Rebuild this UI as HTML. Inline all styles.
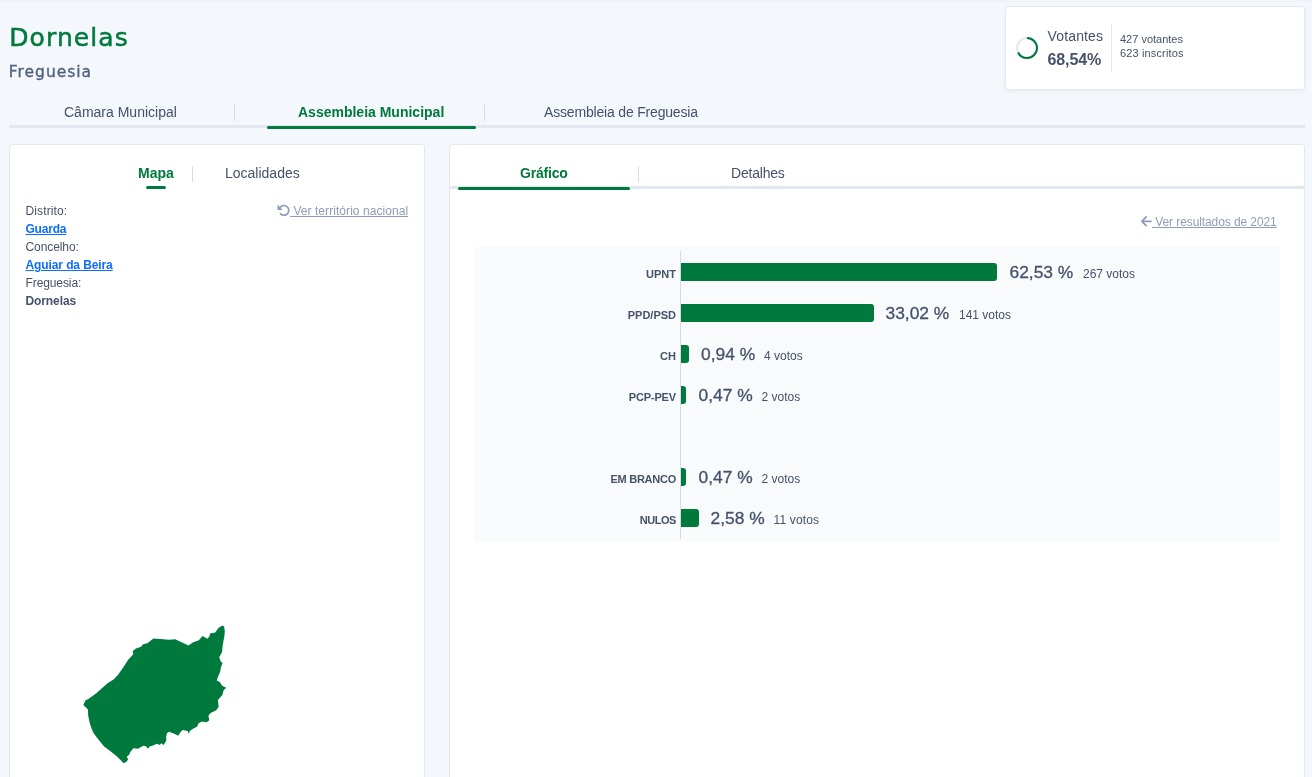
<!DOCTYPE html>
<html lang="pt">
<head>
<meta charset="utf-8">
<title>Dornelas</title>
<style>
*{box-sizing:border-box;margin:0;padding:0}
html,body{width:1312px;height:777px;overflow:hidden}
body{background:#f4f7fb;font-family:"Liberation Sans",sans-serif;color:#465269;position:relative}
.abs{position:absolute;white-space:nowrap;line-height:1}
.card{position:absolute;background:#fff;border:1px solid #e2e8f1;border-radius:3.5px}
.green{color:#00793c}
.b{font-weight:bold}
.t14{font-size:14px}
.bar{position:absolute;background:#00793c;height:18px;left:681px;border-radius:0 3px 3px 0}
.lbl{position:absolute;white-space:nowrap;line-height:1;font-size:11px;font-weight:bold;right:636px;text-align:right}
.pct{position:absolute;white-space:nowrap;line-height:1;font-size:17.4px;-webkit-text-stroke:0.3px #465269}
.vts{position:absolute;white-space:nowrap;line-height:1;font-size:12px}
a{color:inherit}
</style>
</head>
<body><div id="root" style="position:absolute;left:0;top:0;width:1312px;height:777px;will-change:transform">
<div class="abs" style="left:0;top:0;width:1312px;height:3px;background:linear-gradient(#eef2f7,#f4f7fb)"></div>

<!-- header -->
<div id="title" class="abs green" style="left:9.3px;top:24.9px;font-family:'DejaVu Sans',sans-serif;font-size:25px;letter-spacing:1.07px;-webkit-text-stroke:0.5px #00793c">Dornelas</div>
<div id="sub" class="abs" style="left:8.8px;top:64.9px;font-family:'DejaVu Sans',sans-serif;font-size:15.5px;letter-spacing:0.98px;color:#50607f;-webkit-text-stroke:0.35px #50607f">Freguesia</div>

<!-- votantes card -->
<div class="card" style="left:1005px;top:6px;width:300px;height:84px;box-shadow:0 2px 4px rgba(60,80,120,.05)"></div>
<svg class="abs" style="left:1014px;top:35px" width="26" height="26" viewBox="0 0 26 26">
  <circle cx="13" cy="13" r="10" fill="none" stroke="#e3e8f0" stroke-width="2"/>
  <circle cx="13" cy="13" r="10" fill="none" stroke="#00793c" stroke-width="2" stroke-dasharray="42.2 62.83" transform="rotate(-90 13 13)"/>
</svg>
<div id="vot" class="abs" style="left:1047.5px;top:29.3px;font-size:14px;letter-spacing:0.15px">Votantes</div>
<div id="votp" class="abs b" style="left:1047.5px;top:52px;font-size:16px;letter-spacing:-0.12px">68,54%</div>
<div class="abs" style="left:1111px;top:24px;width:1px;height:48px;background:#e3e8f0"></div>
<div id="v1" class="abs" style="left:1120px;top:34px;font-size:11px">427 votantes</div>
<div id="v2" class="abs" style="left:1120px;top:48px;font-size:11px;letter-spacing:0.14px">623 inscritos</div>

<!-- main tabs -->
<div class="abs" style="left:9px;top:125px;width:1296px;height:3px;background:#e3e8f0"></div>
<div class="abs" style="left:267px;top:126px;width:209px;height:3px;background:#00793c;border-radius:2px"></div>
<div class="abs" style="left:234px;top:105px;width:1px;height:16px;background:#d5dbe6"></div>
<div class="abs" style="left:484px;top:105px;width:1px;height:16px;background:#d5dbe6"></div>
<div id="tab1" class="abs t14" style="left:64px;top:105px">Câmara Municipal</div>
<div id="tab2" class="abs t14 b green" style="left:298px;top:105px">Assembleia Municipal</div>
<div id="tab3" class="abs t14" style="left:544px;top:105px;letter-spacing:-0.18px">Assembleia de Freguesia</div>

<!-- left card -->
<div class="card" style="left:9px;top:144px;width:416px;height:700px"></div>
<div id="mapa" class="abs t14 b green" style="left:138px;top:166px">Mapa</div>
<div class="abs" style="left:146px;top:186px;width:20px;height:3px;background:#00793c;border-radius:2px"></div>
<div class="abs" style="left:192px;top:166px;width:1px;height:16px;background:#d5dbe6"></div>
<div id="loc" class="abs t14" style="left:225px;top:166px">Localidades</div>

<div id="l1" class="abs" style="left:25.5px;top:205px;font-size:12px;letter-spacing:0.12px">Distrito:</div>
<div id="l2" class="abs b" style="left:25.5px;top:223px;font-size:12px;color:#0d6efd;letter-spacing:-0.22px"><a href="#" style="text-decoration:underline">Guarda</a></div>
<div id="l3" class="abs" style="left:25.5px;top:241px;font-size:12px;letter-spacing:-0.08px">Concelho:</div>
<div id="l4" class="abs b" style="left:25.5px;top:259px;font-size:12px;color:#0d6efd;letter-spacing:-0.1px"><a href="#" style="text-decoration:underline">Aguiar da Beira</a></div>
<div id="l5" class="abs" style="left:25.5px;top:277px;font-size:12px;letter-spacing:-0.1px">Freguesia:</div>
<div id="l6" class="abs b" style="left:25.5px;top:295px;font-size:12px;letter-spacing:-0.1px">Dornelas</div>

<svg class="abs" style="left:277px;top:204px" width="14" height="14" viewBox="0 0 14 14">
  <path d="M2.98 3.57 A4.85 4.85 0 1 1 3.52 9.78" fill="none" stroke="#8e9bb9" stroke-width="1.7" stroke-linecap="round"/>
  <path d="M0.5 0.5 L0.5 5.9 L5.7 5.9 Z" fill="#8e9bb9"/>
</svg>
<div id="vtn" class="abs" style="left:290px;top:205px;font-size:12px;color:#8e9bb9;letter-spacing:0.06px"><a href="#" style="text-decoration:underline">&nbsp;Ver território nacional</a></div>

<svg class="abs" style="left:60px;top:610px" width="190" height="167" viewBox="0 0 190 167">
<polygon fill="#00793c" points="23.4,95.1 25.3,90.6 28.4,88.9 36.3,83.3 41.9,78.3 47.5,73.2 53.6,69.6 58.1,64.8 63.2,57.6 68.2,49.7 73.2,44.3 72.7,41.0 76.0,38.5 81.1,36.8 82.7,34.6 87.8,32.9 93.4,28.4 100.1,29.0 109.1,29.8 115.2,29.2 121.0,31.9 128.5,35.4 133.2,32.2 138.9,30.3 142.4,25.9 147.4,28.8 149.4,26.4 150.0,23.5 152.9,23.0 155.2,22.4 158.6,17.7 162.7,15.4 164.1,16.6 164.8,21.2 164.4,25.9 162.7,35.1 162.1,42.1 159.2,47.3 161.0,51.9 162.7,52.7 161.0,57.1 160.2,61.8 158.1,66.4 156.7,70.5 159.8,72.0 162.1,75.7 166.2,77.8 163.6,80.3 162.4,85.0 157.9,90.1 158.7,96.8 156.2,100.2 150.6,103.0 148.4,105.8 149.3,110.2 146.7,112.3 141.7,111.6 138.3,113.6 137.2,116.4 132.2,119.2 129.9,120.9 128.8,123.7 127.7,120.9 122.6,120.1 119.8,123.1 118.4,125.7 114.2,123.7 109.2,121.7 107.0,123.1 106.1,127.0 106.4,130.4 103.6,134.9 101.4,133.2 99.7,134.9 96.9,133.8 92.4,135.8 89.6,136.6 87.9,138.8 85.7,136.0 83.4,135.8 79.5,137.7 78.4,138.8 73.4,138.2 70.1,142.2 69.3,144.4 66.7,147.0 68.2,149.2 66.5,151.7 63.7,153.3 61.5,151.1 57.0,146.6 50.8,141.6 44.1,136.6 37.4,128.2 33.5,123.1 31.8,119.2 29.6,112.5 28.2,105.8 27.9,99.6 26.2,97.7"/>
</svg>

<!-- right card -->
<div class="card" style="left:449px;top:144px;width:856px;height:700px"></div>
<div class="abs" style="left:450px;top:186px;width:854px;height:3px;background:#e3e8f0"></div>
<div class="abs" style="left:458px;top:187px;width:172px;height:3px;background:#00793c;border-radius:2px"></div>
<div class="abs" style="left:638px;top:166px;width:1px;height:16px;background:#d5dbe6"></div>
<div id="graf" class="abs t14 b green" style="left:520px;top:166px;letter-spacing:-0.2px">Gráfico</div>
<div id="det" class="abs t14" style="left:731px;top:166px;letter-spacing:-0.2px">Detalhes</div>

<svg class="abs" style="left:1140px;top:215px" width="13" height="13" viewBox="0 0 13 13" fill="none" stroke="#8e9bb9" stroke-width="1.7" stroke-linecap="round" stroke-linejoin="round"><path d="M1.9 6.3 H11 M6.2 1.9 L1.8 6.3 L6.2 10.7"/></svg>
<div id="vr" class="abs" style="left:1152px;top:216px;font-size:12px;color:#8e9bb9;letter-spacing:-0.09px"><a href="#" style="text-decoration:underline">&nbsp;Ver resultados de 2021</a></div>

<div class="abs" style="left:474px;top:247px;width:806px;height:295px;background:#f8fafc"></div>
<div class="abs" style="left:680px;top:251px;width:1px;height:288px;background:#d5dbe6"></div>

<div class="bar" style="top:263px;width:316px"></div>
<div class="bar" style="top:304px;width:192.5px"></div>
<div class="bar" style="top:345px;width:8px"></div>
<div class="bar" style="top:386px;width:5px"></div>
<div class="bar" style="top:468px;width:5px"></div>
<div class="bar" style="top:509px;width:17.6px"></div>

<div class="lbl" style="top:269px">UPNT</div>
<div class="lbl" style="top:310px">PPD/PSD</div>
<div class="lbl" style="top:351px">CH</div>
<div class="lbl" style="top:392px;letter-spacing:-0.15px">PCP-PEV</div>
<div class="lbl" style="top:474px;letter-spacing:-0.25px">EM BRANCO</div>
<div class="lbl" style="top:515px;letter-spacing:-0.45px">NULOS</div>

<div class="pct" style="left:1009.5px;top:263.6px">62,53 %</div><div class="vts" style="left:1083px;top:268px">267 votos</div>
<div class="pct" style="left:885.5px;top:304.6px">33,02 %</div><div class="vts" style="left:959px;top:309px">141 votos</div>
<div class="pct" style="left:701px;top:345.6px">0,94 %</div><div class="vts" style="left:764px;top:350px">4 votos</div>
<div class="pct" style="left:698.5px;top:386.6px">0,47 %</div><div class="vts" style="left:761.5px;top:391px">2 votos</div>
<div class="pct" style="left:698.5px;top:468.6px">0,47 %</div><div class="vts" style="left:761.5px;top:473px">2 votos</div>
<div class="pct" style="left:710.5px;top:509.6px">2,58 %</div><div class="vts" style="left:773.5px;top:514px;letter-spacing:0.15px">11 votos</div>
</div></body>
</html>
